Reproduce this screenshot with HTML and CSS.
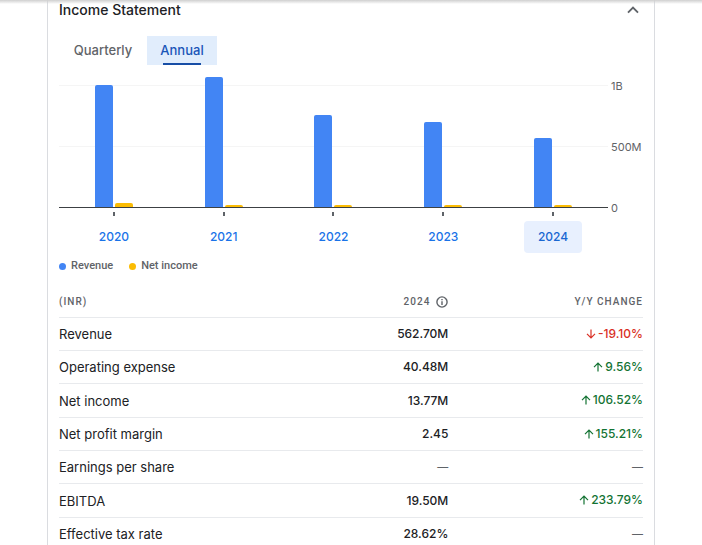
FILE: index.html
```html
<!DOCTYPE html>
<html lang="en">
<head>
<meta charset="utf-8">
<meta name="viewport" content="width=device-width, initial-scale=1">
<title>Income Statement</title>
<link rel="stylesheet" href="styles.css">
</head>
<body>
<div class="top-shadow"></div>
<main class="card">
  <header class="card-header">
    <h1>Income Statement</h1>
    <button class="collapse" type="button" aria-label="Collapse" aria-expanded="true">
      <svg width="12" height="8" viewBox="0 0 12 8" aria-hidden="true"><path d="M1 6.7 6 1.7l5 5" fill="none" stroke="currentColor" stroke-width="1.9"/></svg>
    </button>
  </header>

  <div class="tabs" role="tablist">
    <button class="tab" type="button" role="tab" aria-selected="false">Quarterly</button>
    <button class="tab active" type="button" role="tab" aria-selected="true">Annual</button>
  </div>

  <section class="chart" aria-label="Revenue and net income by year">
    <div class="plot">
      <div class="pair"><div class="bar revenue" style="height:122px"></div><div class="bar income" style="height:4px"></div></div>
      <div class="pair"><div class="bar revenue" style="height:130px"></div><div class="bar income" style="height:2px"></div></div>
      <div class="pair"><div class="bar revenue" style="height:92px"></div><div class="bar income" style="height:2px"></div></div>
      <div class="pair"><div class="bar revenue" style="height:85px"></div><div class="bar income" style="height:2px"></div></div>
      <div class="pair"><div class="bar revenue" style="height:69px"></div><div class="bar income" style="height:2px"></div></div>
    </div>
    <div class="axis"><span>1B</span><span>500M</span><span>0</span></div>
    <div class="years">
      <button class="year" type="button">2020</button>
      <button class="year" type="button">2021</button>
      <button class="year" type="button">2022</button>
      <button class="year" type="button">2023</button>
      <button class="year selected" type="button">2024</button>
    </div>
  </section>

  <ul class="legend">
    <li><span class="dot revenue"></span>Revenue</li>
    <li><span class="dot income"></span>Net income</li>
  </ul>

  <svg class="symbols" aria-hidden="true">
    <symbol id="up" viewBox="0 0 10 10"><path d="M5 9.5V1.3M1 5.2l4-4 4 4" fill="none" stroke="currentColor" stroke-width="1.2"/></symbol>
    <symbol id="down" viewBox="0 0 10 10"><path d="M5 .5v8.2M1 4.8l4 4 4-4" fill="none" stroke="currentColor" stroke-width="1.2"/></symbol>
  </svg>

  <table>
    <thead>
      <tr>
        <th scope="col">(INR)</th>
        <th scope="col"><span class="period">2024
          <svg width="12" height="12" viewBox="0 0 12 12" aria-hidden="true"><circle cx="6" cy="6" r="5.1" fill="none" stroke="currentColor" stroke-width="1.4"/><path d="M6 5.3V9M6 3v1.3" stroke="currentColor" stroke-width="1.4"/></svg></span></th>
        <th scope="col">Y/Y CHANGE</th>
      </tr>
    </thead>
    <tbody>
      <tr><th scope="row">Revenue</th><td>562.70M</td><td><span class="change down"><svg><use href="#down"/></svg>-19.10%</span></td></tr>
      <tr><th scope="row">Operating expense</th><td>40.48M</td><td><span class="change up"><svg><use href="#up"/></svg>9.56%</span></td></tr>
      <tr><th scope="row">Net income</th><td>13.77M</td><td><span class="change up"><svg><use href="#up"/></svg>106.52%</span></td></tr>
      <tr><th scope="row">Net profit margin</th><td>2.45</td><td><span class="change up"><svg><use href="#up"/></svg>155.21%</span></td></tr>
      <tr><th scope="row">Earnings per share</th><td class="none">—</td><td class="none">—</td></tr>
      <tr><th scope="row">EBITDA</th><td>19.50M</td><td><span class="change up"><svg><use href="#up"/></svg>233.79%</span></td></tr>
      <tr><th scope="row">Effective tax rate</th><td>28.62%</td><td class="none">—</td></tr>
    </tbody>
  </table>
</main>
</body>
</html>
```
FILE: styles.css
```css
* { box-sizing: border-box; }

html { scrollbar-width: none; }

body {
  margin: 0;
  background: #fff;
  color: #202124;
  font-family: "Google Sans", Inter, "Liberation Sans", sans-serif;
  font-size: 13px;
  line-height: 20px;
}

button {
  margin: 0;
  padding: 0;
  border: 0;
  background: none;
  font: inherit;
  cursor: pointer;
}

.top-shadow {
  position: fixed;
  inset: 0 0 auto;
  height: 4px;
  background: linear-gradient(#cfcfcf, rgba(255, 255, 255, 0));
}

.card {
  min-height: 100vh;
  margin: 0 47px;
  padding: 0 11px;
  border: solid #dadce0;
  border-width: 0 1px;
}

.card-header {
  display: flex;
  align-items: center;
  justify-content: space-between;
  height: 20px;
}

h1 {
  margin: 0;
  font-size: 14px;
  font-weight: 500;
}

.collapse {
  display: grid;
  place-items: center;
  width: 20px;
  height: 20px;
  color: #5f6368;
}

.tabs {
  display: grid;
  grid-template-columns: 88px 70px;
  margin: 16px 0 12px;
}

.tab {
  position: relative;
  height: 29px;
  padding-bottom: 2px;
  color: #5f6368;
  font-weight: 500;
}

.tab.active {
  background: #e1edfc;
  color: #1a56b8;
}

.tab.active::after {
  content: "";
  position: absolute;
  right: 16px;
  bottom: 0;
  left: 16px;
  height: 2px;
  background: #174ea6;
}

.chart {
  display: grid;
  grid-template-columns: 1fr 35px;
}

.plot {
  display: grid;
  grid-template-columns: repeat(5, 1fr);
  height: 131px;
  border-bottom: 1px solid #3c4043;
  background:
    linear-gradient(#f5f5f5, #f5f5f5) 0 8px / 100% 1px no-repeat,
    linear-gradient(#f5f5f5, #f5f5f5) 0 69px / 100% 1px no-repeat;
}

.pair {
  display: flex;
  align-items: flex-end;
  justify-content: center;
  gap: 2px;
}

.bar {
  width: 18px;
  border-radius: 2px 2px 0 0;
}

.revenue { background: #4285f4; }
.income { background: #fbbc04; }

.axis {
  display: flex;
  flex-direction: column;
  justify-content: space-between;
  height: 140px;
  margin-bottom: -9px;
  padding-left: 3px;
  color: #5f6368;
  font-size: 11px;
  line-height: 18px;
}

.years {
  display: grid;
  grid-template-columns: repeat(5, 1fr);
  justify-items: center;
}

.year {
  position: relative;
  width: 58px;
  height: 32px;
  margin-top: 13px;
  border-radius: 4px;
  color: #1a73e8;
  font-size: 12px;
  font-weight: 500;
}

.year::before {
  content: "";
  position: absolute;
  top: -9px;
  left: 28px;
  width: 2px;
  height: 4px;
  background: #5f6368;
}

.year.selected {
  background: #e8f0fe;
  color: #1967d2;
}

.legend {
  display: flex;
  gap: 16px;
  margin: 3px 0 10px;
  padding: 0;
  color: #5f6368;
  font: 500 11px/20px Roboto, sans-serif;
  list-style: none;
}

.legend li {
  display: flex;
  align-items: center;
  gap: 5px;
}

.dot {
  width: 7px;
  height: 7px;
  margin-top: 1px;
  border-radius: 50%;
}

.symbols {
  display: none;
}

table {
  width: 100%;
  border-collapse: separate;
  border-spacing: 0;
  table-layout: fixed;
}

th,
td {
  height: 33px;
  padding: 0;
  border-bottom: 1px solid #e8eaed;
  font-weight: 500;
  text-align: right;
  white-space: nowrap;
}

td { font-size: 12px; }

th:first-child { text-align: left; }

tbody th { font-weight: 400; }

tbody tr:nth-child(3n) > * { height: 34px; }

thead th {
  height: 32px;
  color: #5f6368;
  font: 500 10px/20px Roboto, sans-serif;
  letter-spacing: 1px;
}

.period {
  display: inline-flex;
  align-items: center;
  gap: 6px;
}

.change {
  display: inline-flex;
  align-items: center;
  gap: 2px;
}

.change svg {
  width: 10px;
  height: 10px;
}

.change.up { color: #137333; }
.change.down { color: #d93025; }

.none {
  color: #5f6368;
  font-size: 11px;
}
```
